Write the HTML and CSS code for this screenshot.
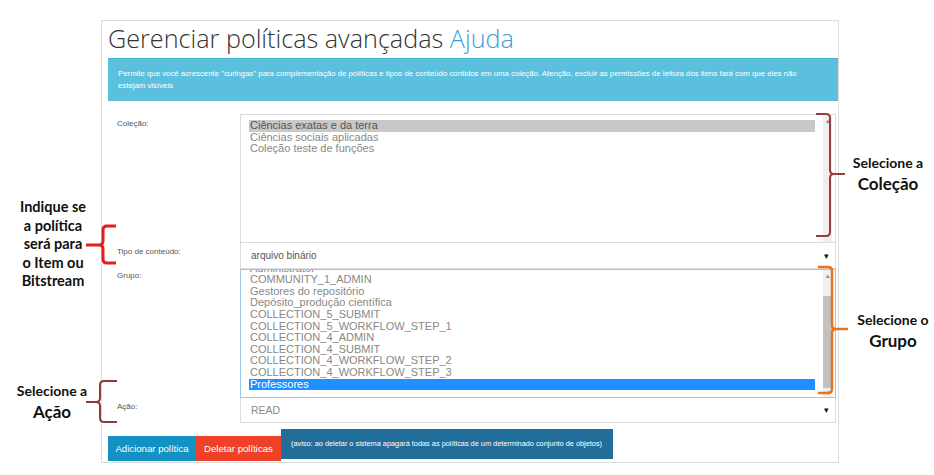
FILE: index.html
```html
<!DOCTYPE html>
<html lang="pt">
<head>
<meta charset="utf-8">
<title>Gerenciar políticas avançadas</title>
<link rel="stylesheet" href="styles.css">
</head>
<body>
<div class="page">
  <div class="panel">
    <h1 class="title">Gerenciar políticas avançadas <span class="help">Ajuda</span></h1>
    <div class="info">Permite que você acrescente "curingas" para complementação de políticas e tipos de conteúdo contidos em uma coleção. Atenção, excluir as permissões de leitura dos itens fará com que eles não estejam visíveis</div>
    <div class="form">
      <div class="row">
        <div class="label">Coleção:</div>
        <div class="listbox coll">
          <div class="items">
            <div class="item sel-gray">Ciências exatas e da terra</div>
            <div class="item">Ciências sociais aplicadas</div>
            <div class="item">Coleção teste de funções</div>
          </div>
          <div class="sbar light"><span class="up">▴</span></div>
        </div>
      </div>
      <div class="row">
        <div class="label">Tipo de conteúdo:</div>
        <div class="select"><span>arquivo binário</span><span class="caret">▾</span></div>
      </div>
      <div class="row">
        <div class="label">Grupo:</div>
        <div class="listbox grp">
          <div class="items scrolled">
            <div class="item">Administrator</div>
            <div class="item">COMMUNITY_1_ADMIN</div>
            <div class="item">Gestores do repositório</div>
            <div class="item">Depósito_produção científica</div>
            <div class="item">COLLECTION_5_SUBMIT</div>
            <div class="item">COLLECTION_5_WORKFLOW_STEP_1</div>
            <div class="item">COLLECTION_4_ADMIN</div>
            <div class="item">COLLECTION_4_SUBMIT</div>
            <div class="item">COLLECTION_4_WORKFLOW_STEP_2</div>
            <div class="item">COLLECTION_4_WORKFLOW_STEP_3</div>
            <div class="item sel-blue">Professores</div>
          </div>
          <div class="sbar"><span class="up">▴</span><div class="thumb"></div><span class="down">▾</span></div>
        </div>
      </div>
      <div class="row">
        <div class="label">Ação:</div>
        <div class="select action"><span>READ</span><span class="caret">▾</span></div>
      </div>
    </div>
    <div class="actions">
      <button class="btn add">Adicionar política</button>
      <button class="btn del">Deletar políticas</button>
      <div class="notice">(aviso: ao deletar o sistema apagará todas as políticas de um determinado conjunto de objetos)</div>
    </div>
  </div>

  <svg class="marks" width="934" height="475" viewBox="0 0 934 475" fill="none">
    <path d="M816,114 L826,114 Q830,114 830,118 L830,170 Q830,174 834,174 L845,174 M834,174 Q830,174 830,178 L830,232 Q830,236 826,236 L816,236" stroke="#a03a3a" stroke-width="2"/>
    <path d="M818,267 L828,267 Q832,267 832,271 L832,325 Q832,329 836,329 L848,329 M836,329 Q832,329 832,333 L832,389 Q832,393 828,393 L818,393" stroke="#e8731c" stroke-width="2.5"/>
    <path d="M116,226 L107,226 Q103,226 103,230 L103,241 Q103,245 99,245 L86,245 M99,245 Q103,245 103,249 L103,259 Q103,263 107,263 L116,263" stroke="#e81e1e" stroke-width="3"/>
    <path d="M117,381 L104,381 Q100,381 100,385 L100,398 Q100,402 96,402 L86,402 M96,402 Q100,402 100,406 L100,418 Q100,422 104,422 L117,422" stroke="#8e3a3a" stroke-width="2"/>
  </svg>

  <div class="note note-coll"><span class="small">Selecione a</span><span class="big">Coleção</span></div>
  <div class="note note-grp"><span class="small">Selecione o</span><span class="big">Grupo</span></div>
  <div class="note note-tipo">Indique se<br>a política<br>será para<br>o Item ou<br>Bitstream</div>
  <div class="note note-acao"><span class="small">Selecione a</span><span class="big">Ação</span></div>
</div>
</body>
</html>
```

FILE: styles.css
```css
* { box-sizing: border-box; }
html, body { margin: 0; padding: 0; background: #fff; }
body { font-family: "Liberation Sans", Arial, sans-serif; color: #555; }

.page { position: relative; width: 934px; height: 475px; overflow: hidden; }

.panel {
  margin: 20px 0 0 101px;
  width: 738px;
  height: 443px;
  border: 1px solid #dcdcdc;
  padding: 0 0 0 6px;
  display: flex;
  flex-direction: column;
}

.title {
  margin: 0;
  height: 37px;
  padding: 1px 0 0 0;
  font-family: "Open Sans", sans-serif;
  font-weight: 300;
  font-size: 25.2px;
  line-height: 32px;
  color: #333;
  white-space: nowrap;
}
.help { color: #3a9fd6; }

.info {
  background: #5bc0de;
  border-top: 1px solid #46b2d4;
  color: #fff;
  height: 43px;
  padding: 9px 20px 0 10px;
  font-size: 7.8px;
  line-height: 12px;
}

.form { margin-top: 13px; display: flex; flex-direction: column; }
.row { display: flex; }
.label {
  width: 132px;
  padding: 4px 0 0 9px;
  font-size: 8px;
  color: #555;
}

.listbox {
  width: 596px;
  border: 1px solid #dcdcdc;
  display: flex;
  overflow: hidden;
  font-size: 11px;
  line-height: 11.6px;
  color: #888;
}
.listbox .items { flex: 1; padding: 0 0 0 8px; }
.coll { height: 129px; }
.coll .items { padding-top: 5px; }
.grp { height: 129px; border-color: #9cc8e8; }
.grp .items { margin-top: -7.4px; }
.item { padding-left: 1px; white-space: nowrap; }
.sel-gray { background: #c8c8c8; color: #555; }
.sel-blue { background: #1e90ff; color: #fff; }

.sbar {
  width: 9px;
  margin: 0 3px 0 8px;
  background: #f0f0f0;
  display: flex;
  flex-direction: column;
  align-items: center;
  font-size: 7px;
  line-height: 8px;
  color: #888;
}
.sbar.light { background: #efefef; }
.sbar .up { margin-top: 2px; }
.sbar .thumb { width: 9px; height: 94px; margin-top: 16px; background: #c1c1c1; }
.sbar .down { margin-top: 1px; color: #bbb; }

.row:nth-child(1) .label { padding-top: 5px; }
.row:nth-child(2) .label { padding-top: 4px; }
.row:nth-child(3) .label { padding-top: 2px; }
.row:nth-child(4) .label { padding-top: 4px; }

.select {
  width: 596px;
  height: 26px;
  border: 1px solid #dcdcdc;
  border-top: none;
  display: flex;
  align-items: center;
  justify-content: space-between;
  padding: 0 6px 0 10px;
  font-size: 10px;
  color: #555;
}
.select.action { height: 25px; color: #888; font-size: 10.5px; }
.caret { color: #111; font-size: 9px; }

.actions {
  margin-top: 6px;
  display: flex;
  align-items: flex-start;
}
.btn {
  margin-top: 7px;
  height: 25px;
  border: none;
  color: #fff;
  font-family: "Liberation Sans", Arial, sans-serif;
  font-size: 9.6px;
  padding: 0;
  white-space: nowrap;
  text-align: center;
}
.btn.add { background: #1291c2; width: 88px; }
.btn.del { background: #ef4128; width: 85px; }
.notice {
  height: 30px;
  width: 332px;
  background: #226e9a;
  color: #fff;
  font-size: 7.35px;
  line-height: 30px;
  padding-left: 10px;
  white-space: nowrap;
}

.marks { position: absolute; left: 0; top: 0; pointer-events: none; }

.note {
  position: absolute;
  font-family: "Lato", "Open Sans", sans-serif;
  font-weight: 700;
  color: #111;
  text-align: center;
  display: flex;
  flex-direction: column;
  align-items: center;
}
.note .small { font-size: 14px; line-height: 20px; }
.note .big { font-size: 17px; line-height: 22px; }
.note-coll { left: 848px; top: 153px; width: 80px; }
.note-grp { left: 853px; top: 310px; width: 80px; }
.note-acao { left: 12px; top: 381px; width: 80px; }
.note-tipo {
  left: 12px; top: 198px; width: 82px;
  font-size: 14.5px; line-height: 18.5px;
  display: block;
}
```
